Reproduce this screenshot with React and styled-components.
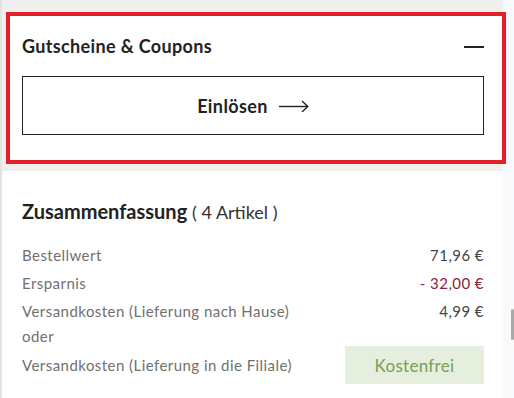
import React from "react";
import styled, { createGlobalStyle } from "styled-components";

const Global = createGlobalStyle`
	body {
		margin: 0;
		background: #f8f9fb;
		font-family: Lato, "Open Sans", sans-serif;
		color: #222;
	}
`;

const Layout = styled.div`
	display: flex;
	width: 514px;
	height: 398px;
	overflow: hidden;
`;

const Main = styled.div`
	width: 501px;
	background: #efefef;
	border-left: 2px solid #e2e2e2;
	padding-top: 12px;
	display: flex;
	flex-direction: column;
	gap: 7px;
`;

const Track = styled.div`
	flex: 1;
	display: flex;
	justify-content: flex-end;
	padding-top: 309px;
`;

const Thumb = styled.div`
	width: 3px;
	height: 31px;
	background: #a9a9a9;
	border-radius: 2px;
`;

const CouponCard = styled.section`
	margin: 0 -3px 0 4px;
	background: #fff;
	border: 4px solid #e3202a;
	padding: 17px 18px 25px 12px;
`;

const Header = styled.div`
	display: flex;
	align-items: center;
	justify-content: space-between;
	height: 26px;
`;

const Title = styled.h2`
	margin: 0;
	font-size: 18px;
	font-weight: 700;
	letter-spacing: 0.35px;
	color: #222;
`;

const Minus = styled.span`
	width: 20px;
	height: 2px;
	background: #222;
	margin-top: 2px;
`;

const Redeem = styled.button`
	margin-top: 17px;
	width: 100%;
	height: 59px;
	background: #fff;
	border: 1px solid #222;
	display: flex;
	align-items: center;
	justify-content: center;
	gap: 11px;
	font-family: inherit;
	font-size: 18px;
	font-weight: 700;
	letter-spacing: 0.4px;
	color: #222;
	cursor: pointer;
`;

const SummaryCard = styled.section`
	flex: 1;
	background: #fff;
	padding: 25px 19px 0 20px;
`;

const Heading = styled.h3`
	margin: 0 0 14px;
	font-size: 20px;
	font-weight: 700;
	line-height: 30px;
	color: #222;

	span {
		font-weight: 400;
		font-size: 18px;
		color: #333;
	}
`;

const Row = styled.div`
	display: flex;
	align-items: center;
	justify-content: space-between;
	height: ${(p) => p.$h || 28}px;
	font-size: 15px;
	letter-spacing: 0.45px;
	color: #707070;
`;

const Value = styled.span`
	color: ${(p) => (p.$discount ? "#8c1d40" : "#444")};
`;

const Free = styled.span`
	width: 139px;
	height: 38px;
	background: #e6eedd;
	color: #76a05a;
	font-size: 17px;
	letter-spacing: 0.3px;
	display: flex;
	align-items: center;
	justify-content: center;
`;

const Arrow = () => (
	<svg width="30" height="12" viewBox="0 0 30 12" fill="none" stroke="#222" strokeWidth="1.4">
		<path d="M0 6.5H28.5" />
		<path d="M23 1L28.8 6.5L23 12" />
	</svg>
);

export default function App() {
	return (
		<Layout>
			<Global />
			<Main>
				<CouponCard>
					<Header>
						<Title>Gutscheine &amp; Coupons</Title>
						<Minus />
					</Header>
					<Redeem>
						Einlösen <Arrow />
					</Redeem>
				</CouponCard>
				<SummaryCard>
					<Heading>
						Zusammenfassung <span>( 4 Artikel )</span>
					</Heading>
					<Row>
						<span>Bestellwert</span>
						<Value>71,96 €</Value>
					</Row>
					<Row>
						<span>Ersparnis</span>
						<Value $discount>- 32,00 €</Value>
					</Row>
					<Row>
						<span>Versandkosten (Lieferung nach Hause)</span>
						<Value>4,99 €</Value>
					</Row>
					<Row $h={21}>
						<span>oder</span>
					</Row>
					<Row $h={38}>
						<span>Versandkosten (Lieferung in die Filiale)</span>
						<Free>Kostenfrei</Free>
					</Row>
				</SummaryCard>
			</Main>
			<Track>
				<Thumb />
			</Track>
		</Layout>
	);
}
